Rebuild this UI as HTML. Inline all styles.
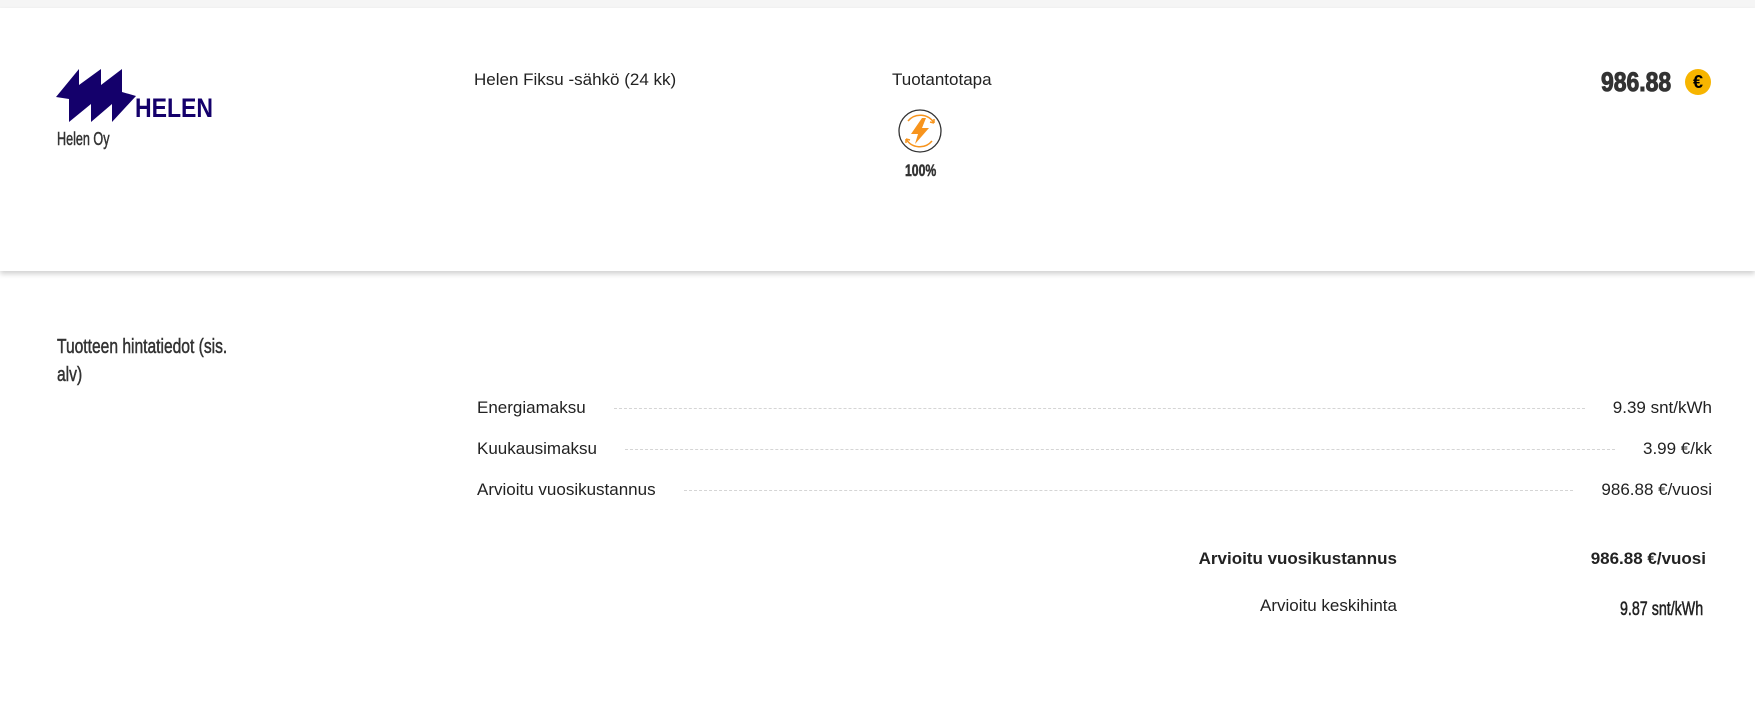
<!DOCTYPE html>
<html><head><meta charset="utf-8"><style>
*{margin:0;padding:0;box-sizing:border-box}
body{width:1755px;height:722px;background:#fff;font-family:"Liberation Sans",Arial,sans-serif;color:#222;position:relative;overflow:hidden}
.band{position:absolute;left:0;top:0;width:1755px;height:8px;background:#f5f5f5}
.card{position:absolute;left:0;top:8px;width:1755px;height:263px;background:#fff;box-shadow:0 3px 5px rgba(0,0,0,0.18)}
.abs{position:absolute;white-space:nowrap}
.cond{display:inline-block;transform-origin:0 0}
.t17{font-size:17px}
.row{position:absolute;left:477px;width:1235px;display:flex;align-items:center;font-size:17px;color:#222}
.row .d{flex:1;border-top:1px dashed #d5d5d5;margin:0 28px;height:0}
.hv{-webkit-text-stroke:0.5px currentColor}
</style></head><body>
<div class="band"></div>
<div class="card"></div>
<svg class="abs" style="left:0;top:0" width="240" height="130">
<polygon fill="#14006b" points="56,97 79,69 79,85 101,69 101,85 122,69 122,92 136,96 112,122 112,104 91,122 91,104 69,122 69,99"/>
<text x="135" y="117" font-family="Liberation Sans" font-weight="bold" font-size="27" fill="#14006b" textLength="78" lengthAdjust="spacingAndGlyphs">HELEN</text>
</svg>
<div class="abs hv" style="left:57px;top:129px;font-size:18px;color:#333"><span class="cond" style="transform:scaleX(0.7)">Helen Oy</span></div>
<div class="abs t17" style="left:474px;top:70px">Helen Fiksu -sähkö (24 kk)</div>
<div class="abs t17" style="left:892px;top:70px">Tuotantotapa</div>
<svg class="abs" style="left:896px;top:107px" width="48" height="48" viewBox="0 0 48 48">
<circle cx="24" cy="24" r="21" fill="none" stroke="#333" stroke-width="1.3"/>
<path d="M12 14 A16 16 0 0 1 38 16" fill="none" stroke="#f7941d" stroke-width="1.5"/>
<path d="M36 34 A16 16 0 0 1 10 32" fill="none" stroke="#f7941d" stroke-width="1.5"/>
<path d="M38 16 l-4 -1 M38 16 l0 -4" stroke="#f7941d" stroke-width="1.5"/>
<path d="M10 32 l4 1 M10 32 l0 4" stroke="#f7941d" stroke-width="1.5"/>
<polygon fill="#f7941d" points="26,11 15,27 22,27 19,37 33,21 26,21 30,11"/>
</svg>
<div class="abs hv" style="left:905px;top:161px;font-size:17px;font-weight:bold;color:#333"><span class="cond" style="transform:scaleX(0.72)">100%</span></div>
<div class="abs" style="left:1601px;top:67px;font-size:27px;font-weight:bold;color:#333;-webkit-text-stroke:1px #333"><span class="cond" style="transform:scaleX(0.85)">986.88</span></div>
<div class="abs" style="left:1685px;top:69px;width:26px;height:26px;border-radius:50%;background:#f7b500;text-align:center;font-weight:bold;font-size:18px;line-height:26px;color:#000">€</div>
<div class="abs hv" style="left:57px;top:333px;font-size:20px;line-height:28px;color:#333"><span class="cond" style="transform:scaleX(0.78)">Tuotteen hintatiedot (sis.<br>alv)</span></div>
<div class="row" style="top:398px"><span>Energiamaksu</span><span class="d"></span><span>9.39 snt/kWh</span></div>
<div class="row" style="top:439px"><span>Kuukausimaksu</span><span class="d"></span><span>3.99 €/kk</span></div>
<div class="row" style="top:480px"><span>Arvioitu vuosikustannus</span><span class="d"></span><span>986.88 €/vuosi</span></div>
<div class="abs" style="right:358px;top:549px;font-size:17px;font-weight:bold">Arvioitu vuosikustannus</div>
<div class="abs" style="right:49px;top:549px;font-size:17px;font-weight:bold">986.88 €/vuosi</div>
<div class="abs" style="right:358px;top:596px;font-size:17px">Arvioitu keskihinta</div>
<div class="abs hv" style="left:1620px;top:599px;font-size:19px"><span class="cond" style="transform:scaleX(0.75)">9.87 snt/kWh</span></div>
</body></html>
